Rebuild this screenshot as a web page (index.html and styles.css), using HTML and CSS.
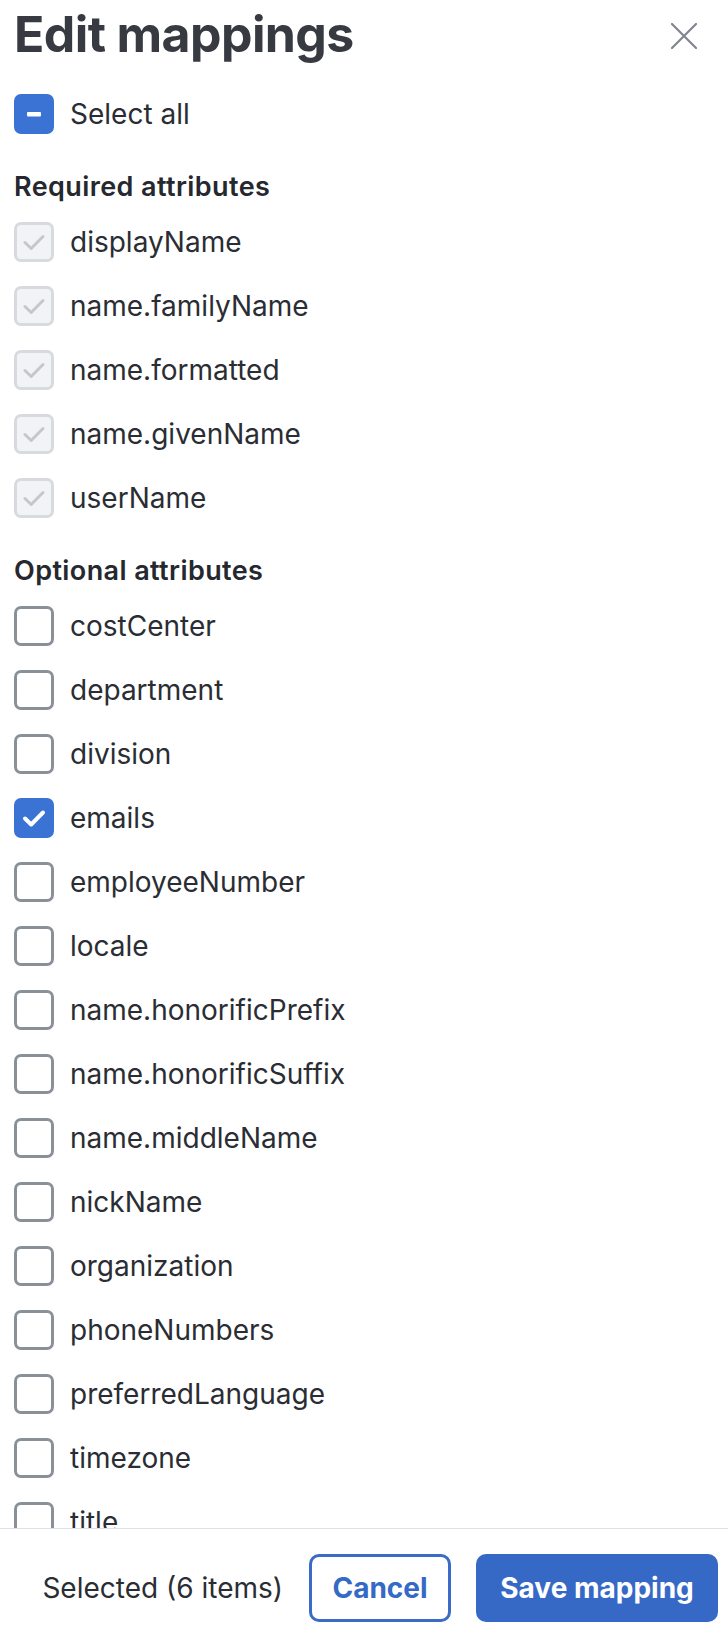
FILE: index.html
```html
<!DOCTYPE html>
<html lang="en">
<head>
  <meta charset="UTF-8">
  <title>Edit mappings</title>
  <link rel="stylesheet" href="styles.css">
</head>
<body>

  <div class="dialog">

    <!-- HEADER -->
    <div class="header">
      <h1 class="title">Edit mappings</h1>
      <button class="close" aria-label="Close">
        <svg width="26" height="26" viewBox="0 0 26 26">
          <path d="M1 1 L25 25 M25 1 L1 25" stroke="#80868e" stroke-width="2.2" stroke-linecap="round"/>
        </svg>
      </button>
    </div>

    <!-- LIST -->
    <div class="content">
      <label class="row">
        <span class="box checked">
          <svg viewBox="0 0 40 40"><rect x="13" y="18" width="14" height="4.5" rx="1" fill="#fff"/></svg>
        </span>
        <span class="text">Select all</span>
      </label>

      <h2 class="group">Required attributes</h2>
      <label class="row">
        <span class="box disabled"><svg viewBox="0 0 40 40"><path d="M11 20.5 L17.2 26.5 L29 14.5"/></svg></span>
        <span class="text">displayName</span>
      </label>
      <label class="row">
        <span class="box disabled"><svg viewBox="0 0 40 40"><path d="M11 20.5 L17.2 26.5 L29 14.5"/></svg></span>
        <span class="text">name.familyName</span>
      </label>
      <label class="row">
        <span class="box disabled"><svg viewBox="0 0 40 40"><path d="M11 20.5 L17.2 26.5 L29 14.5"/></svg></span>
        <span class="text">name.formatted</span>
      </label>
      <label class="row">
        <span class="box disabled"><svg viewBox="0 0 40 40"><path d="M11 20.5 L17.2 26.5 L29 14.5"/></svg></span>
        <span class="text">name.givenName</span>
      </label>
      <label class="row">
        <span class="box disabled"><svg viewBox="0 0 40 40"><path d="M11 20.5 L17.2 26.5 L29 14.5"/></svg></span>
        <span class="text">userName</span>
      </label>

      <h2 class="group">Optional attributes</h2>
      <label class="row"><span class="box"></span><span class="text">costCenter</span></label>
      <label class="row"><span class="box"></span><span class="text">department</span></label>
      <label class="row"><span class="box"></span><span class="text">division</span></label>
      <label class="row">
        <span class="box checked"><svg viewBox="0 0 40 40"><path d="M11 20.5 L17.2 26.5 L29 14.5"/></svg></span>
        <span class="text">emails</span>
      </label>
      <label class="row"><span class="box"></span><span class="text">employeeNumber</span></label>
      <label class="row"><span class="box"></span><span class="text">locale</span></label>
      <label class="row"><span class="box"></span><span class="text">name.honorificPrefix</span></label>
      <label class="row"><span class="box"></span><span class="text">name.honorificSuffix</span></label>
      <label class="row"><span class="box"></span><span class="text">name.middleName</span></label>
      <label class="row"><span class="box"></span><span class="text">nickName</span></label>
      <label class="row"><span class="box"></span><span class="text">organization</span></label>
      <label class="row"><span class="box"></span><span class="text">phoneNumbers</span></label>
      <label class="row"><span class="box"></span><span class="text">preferredLanguage</span></label>
      <label class="row"><span class="box"></span><span class="text">timezone</span></label>
      <label class="row"><span class="box"></span><span class="text">title</span></label>
    </div>

    <!-- FOOTER -->
    <div class="footer">
      <span class="count">Selected (6 items)</span>
      <button class="btn btn-outline">Cancel</button>
      <button class="btn btn-primary">Save mapping</button>
    </div>

  </div>

</body>
</html>
```

FILE: styles.css
```css
html, body {
  margin: 0;
  padding: 0;
  background: #fff;
}

body {
  font-family: Inter, "Noto Sans", sans-serif;
  color: #2a2d33;
}

.dialog {
  height: 100vh;
  display: flex;
  flex-direction: column;
}

.header {
  display: flex;
  justify-content: space-between;
  align-items: center;
  padding: 4px 24px 18px 14px;
}

.title {
  margin: 0;
  font-size: 50px;
  line-height: 60px;
  font-weight: 700;
  letter-spacing: -0.6px;
  color: #373a41;
}

.close {
  width: 40px;
  height: 40px;
  margin-top: 3px;
  padding: 0;
  border: none;
  background: none;
  display: flex;
  align-items: center;
  justify-content: center;
  cursor: pointer;
}

.content {
  flex: 1;
  overflow: hidden;
  padding: 0 14px;
}

.row {
  display: flex;
  align-items: center;
  gap: 16px;
  height: 64px;
  cursor: pointer;
}

.box {
  box-sizing: border-box;
  width: 40px;
  height: 40px;
  flex-shrink: 0;
  border: 3px solid #8a9098;
  border-radius: 7px;
  background: #fff;
}

.box svg {
  display: block;
  width: 40px;
  height: 40px;
  margin: -3px;
}

.box path {
  fill: none;
  stroke-width: 4;
  stroke-linecap: round;
  stroke-linejoin: round;
}

.box.checked {
  border-color: #3a73d4;
  background: #3a73d4;
}

.box.checked path {
  stroke: #fff;
}

.box.disabled {
  border-color: #d8dadf;
  background: #f2f3f5;
}

.box.disabled path {
  stroke: #c4c7cd;
  stroke-width: 3;
}

.text {
  font-size: 28px;
  line-height: 34px;
}

.group {
  margin: 24px 0 6px;
  font-size: 27px;
  line-height: 34px;
  font-weight: 600;
  letter-spacing: 0.4px;
  color: #25282e;
}

.footer {
  display: flex;
  justify-content: flex-end;
  align-items: center;
  gap: 25px;
  padding: 25px 10px 10px;
  border-top: 1px solid #dfe0e4;
}

.count {
  font-size: 28px;
  margin-right: 1px;
}

.btn {
  box-sizing: border-box;
  height: 68px;
  border-radius: 10px;
  font-family: Inter, "Noto Sans", sans-serif;
  font-size: 28px;
  font-weight: 700;
  cursor: pointer;
}

.btn-outline {
  width: 142px;
  border: 3px solid #3a6bc7;
  background: #fff;
  color: #3569c6;
}

.btn-primary {
  width: 242px;
  border: none;
  background: #3669c6;
  color: #fff;
}
```
